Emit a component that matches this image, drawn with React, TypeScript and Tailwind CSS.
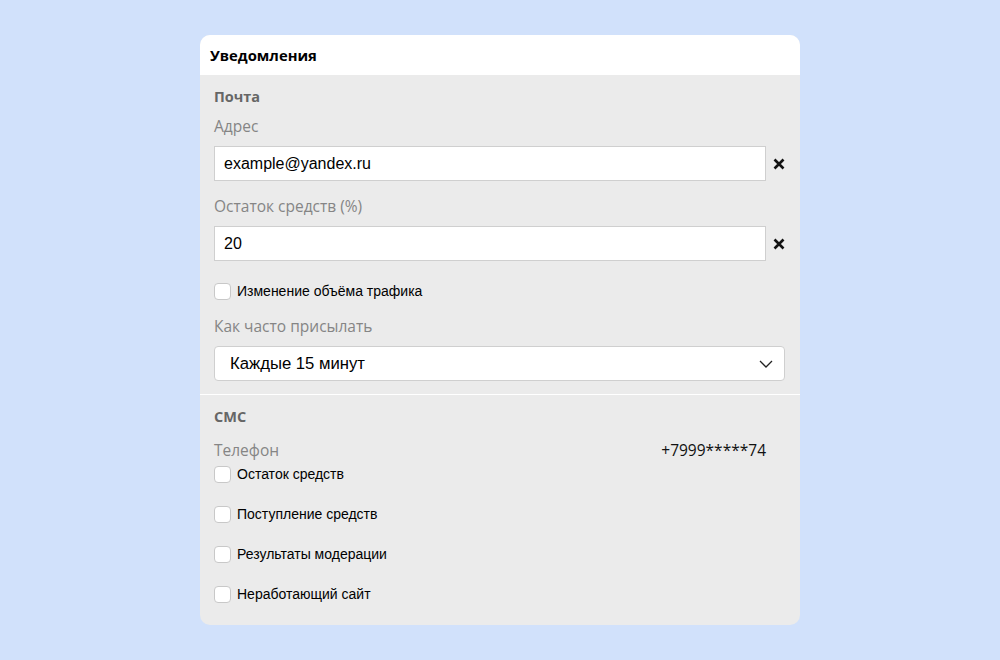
import React from "react";

const os = { fontFamily: '"Open Sans", "Noto Sans", sans-serif' };
const ar = { fontFamily: '"Liberation Sans", Arial, sans-serif' };

function XIcon() {
  return (
    <svg width="12" height="12" viewBox="0 0 12 12" className="shrink-0">
      <path d="M1.5 1.5L10.5 10.5M10.5 1.5L1.5 10.5" stroke="#111" strokeWidth="2.6" strokeLinecap="butt" />
    </svg>
  );
}

function Check({ label }: { label: string }) {
  return (
    <div className="flex items-center h-[20px]">
      <div className="w-[17px] h-[17px] bg-white border border-[#c8c8c8] rounded-[4px] shrink-0" />
      <span className="ml-[6px] text-[14px] text-black" style={ar}>{label}</span>
    </div>
  );
}

function Label({ children, className = "" }: { children: React.ReactNode; className?: string }) {
  return (
    <div className={"text-[15.5px] leading-[20px] text-[#858585] " + className} style={os}>
      {children}
    </div>
  );
}

function Field({ value, className = "" }: { value: string; className?: string }) {
  return (
    <div className={"flex items-center " + className}>
      <div className="w-[552px] h-[35px] bg-white border border-[#cfcfcf] flex items-center px-[9px] text-[16px] text-black" style={ar}>
        {value}
      </div>
      <div className="ml-[7px] w-[12px] flex items-center">
        <XIcon />
      </div>
    </div>
  );
}

export default function App() {
  return (
    <div className="w-[1000px] h-[660px] bg-[#d1e1fb] pt-[35px]">
      <div className="mx-auto w-[600px] rounded-[10px] overflow-hidden bg-[#ebebeb]">
        <div className="h-[40px] bg-white flex items-center px-[10px] text-[14.8px] font-bold text-black" style={os}>
          Уведомления
        </div>
        <div className="px-[14px] pt-[12px] pb-[13px] border-b border-white">
          <div className="text-[14.5px] leading-[20px] font-bold text-[#666]" style={os}>Почта</div>
          <Label className="mt-[9px]">Адрес</Label>
          <Field value="example@yandex.ru" className="mt-[10px]" />
          <Label className="mt-[15px]">Остаток средств (%)</Label>
          <Field value="20" className="mt-[10px]" />
          <div className="mt-[20px]">
            <Check label="Изменение объёма трафика" />
          </div>
          <Label className="mt-[15px]">Как часто присылать</Label>
          <div className="mt-[10px] w-[571px] h-[35px] bg-white border border-[#cfcfcf] rounded-[4px] flex items-center justify-between pl-[15px] pr-[11px]">
            <span className="text-[16.7px] text-black" style={ar}>Каждые 15 минут</span>
            <svg width="14" height="8" viewBox="0 0 14 8">
              <path d="M1 1L7 7L13 1" fill="none" stroke="#222" strokeWidth="1.3" />
            </svg>
          </div>
        </div>
        <div className="px-[14px] pt-[12px] pb-[21px]">
          <div className="text-[14.5px] leading-[20px] font-bold text-[#666]" style={os}>СМС</div>
          <div className="mt-[13px] flex items-center justify-between w-[552px]">
            <Label>Телефон</Label>
            <span className="text-[15.5px] leading-[20px] text-[#111]" style={os}>+7999*****74</span>
          </div>
          <div className="mt-[4px] flex flex-col gap-[20px]">
            <Check label="Остаток средств" />
            <Check label="Поступление средств" />
            <Check label="Результаты модерации" />
            <Check label="Неработающий сайт" />
          </div>
        </div>
      </div>
    </div>
  );
}
